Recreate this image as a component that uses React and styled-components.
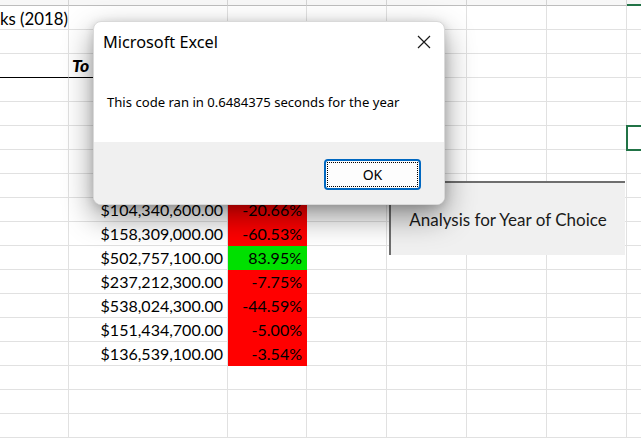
import React from "react";
import styled, { createGlobalStyle } from "styled-components";

const COLS = [69, 159, 79, 80, 80, 80, 80, 80];
const LETTERS = ["A", "B", "C", "D", "E", "F", "G", "H"];

// rows 4-8 sit under the dialog, only the last seven show
const stocks = [
  null,
  null,
  null,
  null,
  null,
  ["$104,340,600.00", "-20.66%"],
  ["$158,309,000.00", "-60.53%"],
  ["$502,757,100.00", "83.95%"],
  ["$237,212,300.00", "-7.75%"],
  ["$538,024,300.00", "-44.59%"],
  ["$151,434,700.00", "-5.00%"],
  ["$136,539,100.00", "-3.54%"],
];

const GlobalStyle = createGlobalStyle`
  html, body {
    margin: 0;
    padding: 0;
    background: #ffffff;
    overflow: hidden;
  }
`;

const Sheet = styled.div`
  position: relative;
  width: 641px;
  height: 445px;
  overflow: hidden;
  background: #ffffff;
  font-family: Lato, "Liberation Sans", sans-serif;
`;

const Grid = styled.div`
  display: grid;
  grid-template-columns: ${COLS.map((w) => `${w}px`).join(" ")};
  grid-template-rows: 6px repeat(18, 24px);
`;

const HeadCell = styled.div`
  box-sizing: border-box;
  display: flex;
  align-items: flex-end;
  justify-content: center;
  overflow: hidden;
  background: #f7f7f7;
  border-right: 1px solid #d4d4d4;
  border-bottom: ${(p) => (p.$active ? "2px solid #217346" : "1px solid #bdbdbd")};

  span {
    font-size: 14px;
    line-height: 14px;
    margin-bottom: 3px;
    color: #444444;
  }
`;

const Cell = styled.div`
  box-sizing: border-box;
  position: relative;
  display: flex;
  align-items: center;
  justify-content: ${(p) => (p.$right ? "flex-end" : "flex-start")};
  padding: 0 4px 0 3px;
  white-space: nowrap;
  overflow: visible;
  font-size: ${(p) => (p.$bold ? "17.5px" : "16px")};
  color: #000000;
  background: ${(p) => p.$fill || "transparent"};
  border-right: 1px solid ${(p) => (p.$fill ? p.$fill : "#e1e1e1")};
  border-bottom: 1px solid
    ${(p) => (p.$rule ? "#000000" : p.$fill ? p.$fill : "#e1e1e1")};
  font-weight: ${(p) => (p.$bold ? 900 : 400)};
  font-style: ${(p) => (p.$bold ? "italic" : "normal")};
  ${(p) =>
    p.$selected &&
    `
    outline: 2px solid #217346;
    outline-offset: -1px;
    z-index: 1;
  `}
`;

const Title = styled.span`
  font-size: 16.8px;
  margin-left: -3px;
  margin-top: 1px;
`;

const MacroButton = styled.div`
  position: absolute;
  left: 389px;
  top: 181px;
  width: 236px;
  height: 74px;
  box-sizing: border-box;
  background: #f0f0f0;
  border-top: 2px solid #6e6e6e;
  border-left: 2px solid #6e6e6e;
  display: flex;
  align-items: center;
  justify-content: center;
  font-family: Lato, "Liberation Sans", sans-serif;
  font-size: 17px;
  color: #1a1a1a;
`;

const Dialog = styled.div`
  position: absolute;
  left: 93px;
  top: 21px;
  width: 352px;
  height: 184px;
  box-sizing: border-box;
  border: 1px solid #d9d9d9;
  border-radius: 8px;
  overflow: hidden;
  background: #ffffff;
  display: flex;
  flex-direction: column;
  font-family: "Noto Sans", "Open Sans", sans-serif;
  box-shadow: 0 12px 30px rgba(0, 0, 0, 0.42), 0 2px 10px rgba(0, 0, 0, 0.14);
  z-index: 5;
`;

const DialogHead = styled.div`
  display: flex;
  align-items: center;
  justify-content: space-between;
  height: 40px;
  padding: 0 12px 0 9px;
  font-size: 16.3px;
  color: #000000;
`;

const CloseButton = styled.div`
  width: 16px;
  height: 16px;
  display: flex;
  align-items: center;
  justify-content: center;
`;

const DialogBody = styled.div`
  flex: 1;
  display: flex;
  align-items: center;
  padding: 0 0 0 13px;
  font-size: 13.1px;
  color: #000000;
`;

const DialogFoot = styled.div`
  height: 62px;
  background: #f0f0f0;
  display: flex;
  align-items: center;
  justify-content: flex-end;
  padding: 0 23px 0 0;
`;

const OkButton = styled.div`
  position: relative;
  width: 97px;
  height: 31px;
  box-sizing: border-box;
  border: 2px solid #0067c0;
  border-radius: 4px;
  background: #fdfdfd;
  display: flex;
  align-items: center;
  justify-content: center;
  font-size: 14px;
  color: #000000;
  margin-top: 3px;

  &::after {
    content: "";
    position: absolute;
    inset: 1px;
    border: 1px dotted #000000;
  }
`;

function rowCells(r) {
  const cells = [];
  for (let c = 0; c < COLS.length; c++) {
    let content = null;
    let props = {};
    if (r === 1 && c === 0) content = <Title>ks (2018)</Title>;
    if (r === 3) {
      if (c <= 2) props.$rule = true;
      if (c === 1) {
        content = "To";
        props.$bold = true;
      }
    }
    if (r >= 4 && r <= 15 && stocks[r - 4]) {
      const [vol, ret] = stocks[r - 4];
      if (c === 1) {
        content = vol;
        props.$right = true;
      }
      if (c === 2) {
        content = ret;
        props.$right = true;
        props.$fill = ret.startsWith("-") ? "#ff0000" : "#00e000";
      }
    }
    if (r === 6 && c === 7) props.$selected = true;
    cells.push(
      <Cell key={`${r}-${c}`} {...props}>
        {content}
      </Cell>
    );
  }
  return cells;
}

export default function App() {
  const rows = [];
  for (let r = 1; r <= 18; r++) rows.push(...rowCells(r));

  return (
    <Sheet>
      <GlobalStyle />
      <Grid>
        {LETTERS.map((l, i) => (
          <HeadCell key={l} $active={i === 7}>
            <span>{l}</span>
          </HeadCell>
        ))}
        {rows}
      </Grid>

      <MacroButton>Analysis for Year of Choice</MacroButton>

      <Dialog>
        <DialogHead>
          <span>Microsoft Excel</span>
          <CloseButton>
            <svg width="14" height="14" viewBox="0 0 14 14">
              <path d="M1 1 L13 13 M13 1 L1 13" stroke="#1a1a1a" strokeWidth="1.2" />
            </svg>
          </CloseButton>
        </DialogHead>
        <DialogBody>This code ran in 0.6484375 seconds for the year</DialogBody>
        <DialogFoot>
          <OkButton>OK</OkButton>
        </DialogFoot>
      </Dialog>
    </Sheet>
  );
}
